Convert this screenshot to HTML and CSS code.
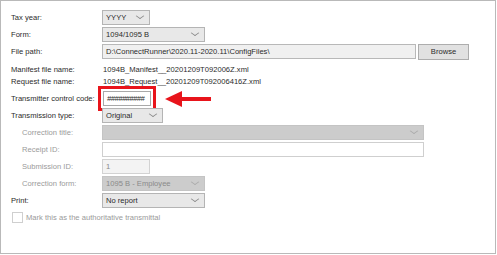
FILE: index.html
```html
<!DOCTYPE html>
<html lang="en">
<head>
    <meta charset="UTF-8">
    <title>Transmittal settings</title>
    <link rel="stylesheet" href="styles.css">
</head>
<body>
    <div class="panel">
        <div class="row">
            <span class="label">Tax year:</span>
            <div class="combo w-small"><span>YYYY</span><i class="chev"></i></div>
        </div>
        <div class="row">
            <span class="label">Form:</span>
            <div class="combo w-mid"><span>1094/1095 B</span><i class="chev"></i></div>
        </div>
        <div class="row">
            <span class="label">File path:</span>
            <div class="field readonly w-path">D:\ConnectRunner\2020.11-2020.11\ConfigFiles\</div>
            <button class="btn">Browse</button>
        </div>

        <div class="info">
            <div class="info-row">
                <span class="label">Manifest file name:</span>
                <span class="value">1094B_Manifest__20201209T092006Z.xml</span>
            </div>
            <div class="info-row">
                <span class="label">Request file name:</span>
                <span class="value">1094B_Request__20201209T092006416Z.xml</span>
            </div>
        </div>

        <div class="row">
            <span class="label">Transmitter control code:</span>
            <div class="highlight">
                <div class="field w-small code">##########</div>
            </div>
            <svg class="arrow" width="48" height="16" viewBox="0 0 48 16">
                <polygon points="0,8 17,0 17,6 46,6 46,10 17,10 17,16" fill="#e8141b"/>
            </svg>
        </div>
        <div class="row">
            <span class="label">Transmission type:</span>
            <div class="combo w-type"><span>Original</span><i class="chev"></i></div>
        </div>
        <div class="row">
            <span class="label sub muted">Correction title:</span>
            <div class="combo disabled w-full"><span></span><i class="chev"></i></div>
        </div>
        <div class="row">
            <span class="label sub muted">Receipt ID:</span>
            <div class="field soft w-full"></div>
        </div>
        <div class="row">
            <span class="label sub muted">Submission ID:</span>
            <div class="field dotted w-small">1</div>
        </div>
        <div class="row">
            <span class="label sub muted">Correction form:</span>
            <div class="combo disabled w-mid"><span>1095 B - Employee</span><i class="chev"></i></div>
        </div>
        <div class="row">
            <span class="label">Print:</span>
            <div class="combo w-mid"><span>No report</span><i class="chev"></i></div>
        </div>
        <div class="row check-row">
            <span class="box"></span>
            <span class="muted">Mark this as the authoritative transmittal</span>
        </div>
    </div>
</body>
</html>
```

FILE: styles.css
```css
body {
    margin: 0;
    background-color: #ffffff;
    font-family: "Liberation Sans", Arial, sans-serif;
    font-size: 7.6px;
    color: #2b2b2b;
}
.panel {
    position: relative;
    box-sizing: border-box;
    width: 496px;
    height: 254px;
    border: 1px solid #b9b9b9;
    padding: 8px 0 0 10px;
}
.row {
    display: flex;
    align-items: center;
    height: 17px;
}
.label {
    width: 91px;
    flex: none;
}
.label.sub {
    box-sizing: border-box;
    padding-left: 11px;
}
.muted {
    color: #9a9a9a;
}
.info {
    margin: 3px 0 3px;
}
.info-row {
    display: flex;
    align-items: center;
    height: 12px;
}
.value {
    padding-left: 1px;
}

/* controls */
.combo,
.field {
    box-sizing: border-box;
    height: 15px;
    display: flex;
    align-items: center;
    padding: 0 3px;
    border: 1px solid #c3c3c3;
    white-space: nowrap;
    overflow: hidden;
}
.combo {
    justify-content: space-between;
    background-color: #e8e8e8;
    border-color: #b4b4b4;
}
.combo.disabled {
    background-color: #cccccc;
    border-color: #c4c4c4;
    color: #8a8a8a;
}
.chev {
    width: 5px;
    height: 5px;
    margin: 0 3px 4px 0;
    border-right: 1px solid #8a8a8a;
    border-bottom: 1px solid #8a8a8a;
    transform: scaleY(0.7) rotate(45deg);
}
.combo.disabled .chev {
    border-color: #aaaaaa;
}
.field {
    background-color: #ffffff;
}
.field.readonly {
    background-color: #f0f0f0;
    border-color: #b8b8b8;
}
.field.soft {
    border-color: #cfcfcf;
}
.field.dotted {
    background-color: #f3f3f3;
    border-color: #d2d2d2;
    color: #8a8a8a;
}
.code {
    border-color: #a9a9a9;
    font-style: italic;
    letter-spacing: -0.5px;
}
.w-small { width: 48px; }
.w-mid { width: 103px; }
.w-type { width: 61px; }
.w-full { width: 322px; }
.w-path { width: 314px; }
.btn {
    box-sizing: border-box;
    width: 51px;
    height: 16px;
    margin-left: 2px;
    padding: 0;
    background-color: #e1e1e1;
    border: 1px solid #adadad;
    font: inherit;
    color: #2b2b2b;
}

/* annotation */
.highlight {
    margin-left: -4px;
    padding: 2px;
    border: 3px solid #e8141b;
}
.arrow {
    margin-left: 9px;
}

.check-row .box {
    box-sizing: border-box;
    width: 11px;
    height: 11px;
    margin: 0 3px 0 1px;
    border: 1px solid #cfcfcf;
    background-color: #ffffff;
}
```
